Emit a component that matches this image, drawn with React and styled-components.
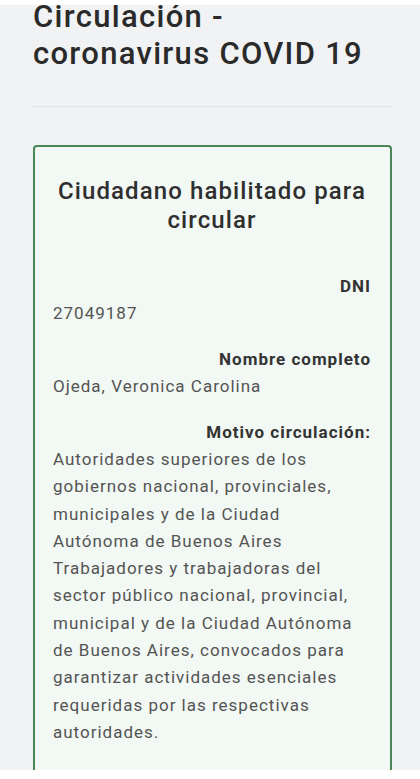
import styled, { createGlobalStyle } from "styled-components";

const GlobalStyle = createGlobalStyle`
  html, body {
    margin: 0;
    padding: 0;
    background: #ffffff;
  }
  body {
    font-family: Roboto, "Noto Sans", "Liberation Sans", sans-serif;
  }
`;

const Screen = styled.div`
  width: 420px;
  height: 779px;
  display: flex;
  flex-direction: column;
  background: #ffffff;
  overflow: hidden;
`;

const Page = styled.main`
  margin-top: 5px;
  height: 765px;
  overflow: hidden;
  background: #f1f2f4;
  padding: 0 28px 0 33px;
  box-sizing: border-box;
`;

const Title = styled.h1`
  max-width: 340px;
  margin: -7px 0 0;
  font-size: 31px;
  line-height: 37px;
  font-weight: 500;
  letter-spacing: 1.3px;
  color: #2a2a2a;
`;

const Divider = styled.hr`
  margin: 34px 0 38px;
  border: 0;
  border-top: 1px solid #e2e3e6;
`;

const Card = styled.section`
  border: 2px solid #4c8456;
  border-radius: 4px;
  background: #f2f8f3;
  padding: 30px 19px 40px 18px;
  box-sizing: border-box;
`;

const CardTitle = styled.h2`
  margin: 0 0 38px;
  text-align: center;
  font-size: 24px;
  line-height: 29px;
  font-weight: 500;
  letter-spacing: 1.1px;
  color: #2f2f2f;
`;

const Field = styled.div`
  display: flex;
  flex-direction: column;
  margin-bottom: 19px;
`;

const Label = styled.span`
  text-align: right;
  font-size: 17px;
  line-height: 27px;
  font-weight: 700;
  letter-spacing: 1px;
  color: #333333;
`;

const Value = styled.span`
  font-size: 17px;
  line-height: 27px;
  letter-spacing: 1px;
  color: #545454;
`;

const Paragraph = styled.p`
  margin: 0;
  font-size: 17px;
  line-height: 27.3px;
  letter-spacing: 1px;
  color: #545454;
`;

export default function App() {
  return (
    <>
      <GlobalStyle />
      <Screen>
        <Page>
          <Title>Circulación - coronavirus COVID 19</Title>
          <Divider />
          <Card>
            <CardTitle>Ciudadano habilitado para circular</CardTitle>
            <Field>
              <Label>DNI</Label>
              <Value>27049187</Value>
            </Field>
            <Field>
              <Label>Nombre completo</Label>
              <Value>Ojeda, Veronica Carolina</Value>
            </Field>
            <Field>
              <Label>Motivo circulación:</Label>
              <Paragraph>
                Autoridades superiores de los gobiernos nacional, provinciales,
                municipales y de la Ciudad Autónoma de Buenos Aires
              </Paragraph>
              <Paragraph>
                Trabajadores y trabajadoras del sector público nacional,
                provincial, municipal y de la Ciudad Autónoma de Buenos Aires,
                convocados para garantizar actividades esenciales requeridas por
                las respectivas autoridades.
              </Paragraph>
            </Field>
          </Card>
        </Page>
      </Screen>
    </>
  );
}
